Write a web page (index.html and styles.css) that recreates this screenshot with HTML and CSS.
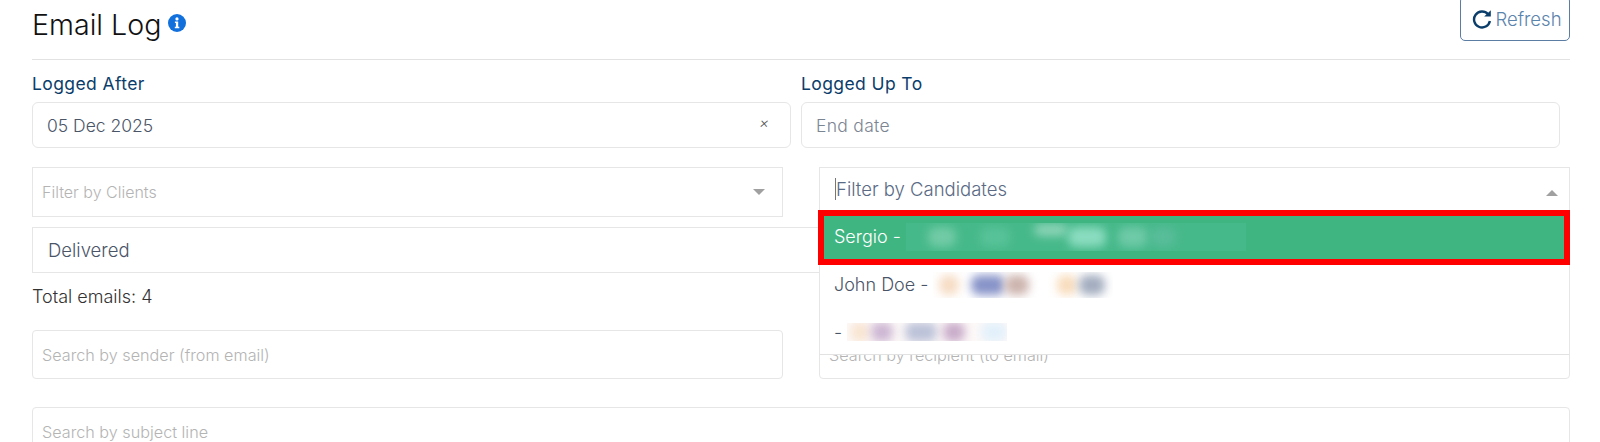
FILE: index.html
```html
<!DOCTYPE html>
<html lang="en">
<head>
  <meta charset="UTF-8" />
  <meta name="viewport" content="width=device-width, initial-scale=1" />
  <title>Email Log</title>
  <link rel="stylesheet" href="styles.css">
</head>
<body>

  <div class="page">
    <div class="page-header">
      <div class="title-wrap">
        <h1>Email Log</h1>
        <svg class="info-icon" viewBox="0 0 18 18" width="18" height="18">
          <circle cx="9" cy="9" r="9" fill="#1170dc" />
          <circle cx="9" cy="4.9" r="1.6" fill="#fff" />
          <path d="M6.9 7.4h3.3v5.4h1.1v1.5H6.8v-1.5h1.1V8.9h-1z" fill="#fff" />
        </svg>
      </div>
      <button type="button" class="refresh-btn">
        <svg class="refresh-icon" viewBox="0 0 20 20" width="20" height="20">
          <path d="M16.1 5.2A8 8 0 1 0 17.9 12" fill="none" stroke="#0b3d6b" stroke-width="2.4" />
          <path d="M12.2 7.6L18.8 1.2v6.4z" fill="#0b3d6b" />
        </svg>
        Refresh
      </button>
    </div>

    <div class="date-row">
      <div class="date-field">
        <label>Logged After</label>
        <div class="date-input">
          <span>05 Dec 2025</span>
          <span class="clear-x">×</span>
        </div>
      </div>
      <div class="date-field">
        <label>Logged Up To</label>
        <div class="date-input placeholder-date">End date</div>
      </div>
    </div>

    <div class="filter-row">
      <div class="select-box">
        <span class="placeholder">Filter by Clients</span>
        <span class="arrow-down"></span>
      </div>
      <div class="candidate-wrap">
        <div class="select-box candidate-box">
          <span class="caret"></span>
          <span>Filter by Candidates</span>
          <span class="arrow-up"></span>
        </div>
        <div class="dropdown">
          <div class="option option-active">
            <span class="option-name">Sergio -</span>
            <div class="redact redact-green">
              <i class="blot g1"></i><i class="blot g2"></i><i class="blot g3"></i>
              <i class="blot g4"></i><i class="blot g5"></i><i class="blot g6"></i>
            </div>
          </div>
          <div class="option option-john">
            <span class="option-name">John Doe -</span>
            <div class="redact redact-john">
              <i class="blot j1"></i><i class="blot j2"></i><i class="blot j3"></i>
              <i class="blot j4"></i><i class="blot j5"></i>
            </div>
          </div>
          <div class="option option-last">
            <span class="option-name">-</span>
            <div class="redact redact-last">
              <i class="blot l1"></i><i class="blot l2"></i><i class="blot l3"></i>
              <i class="blot l4"></i><i class="blot l5"></i>
            </div>
          </div>
        </div>
      </div>
    </div>

    <div class="status-box">Delivered</div>

    <p class="total">Total emails: 4</p>

    <div class="search-row">
      <div class="search-box">Search by sender (from email)</div>
      <div class="search-box recipient-box">Search by recipient (to email)</div>
    </div>

    <div class="search-box subject-box">Search by subject line</div>
  </div>

</body>
</html>
```

FILE: styles.css
```css
html, body {
  margin: 0;
  height: 442px;
  overflow: hidden;
  background: #fff;
}
body {
  font-family: 'Inter', 'Open Sans', sans-serif;
  font-weight: 300;
  color: #4a5568;
}
.page {
  padding: 0 30px 0 32px;
}
.page-header {
  height: 60px;
  box-sizing: border-box;
  border-bottom: 1px solid #e2e2e2;
  display: flex;
  justify-content: space-between;
  align-items: flex-start;
}
.title-wrap {
  display: flex;
  align-items: flex-start;
  gap: 7px;
  padding-top: 6px;
}
h1 {
  margin: 0;
  font-size: 28.6px;
  line-height: 38px;
  font-weight: 300;
  color: #111;
}
.info-icon {
  margin-top: 8px;
}
.refresh-btn {
  width: 110px;
  height: 45px;
  margin-top: -4px;
  border: 1px solid #5b7ca3;
  border-radius: 5px;
  background: #fff;
  color: #5b84ac;
  font-family: inherit;
  font-weight: 300;
  font-size: 18.5px;
  display: flex;
  align-items: center;
  justify-content: center;
  gap: 3px;
  padding: 1px 0 0 4px;
}
.date-row {
  display: grid;
  grid-template-columns: 759px 759px;
  gap: 10px;
  margin-top: 13px;
}
.date-field label {
  display: block;
  font-size: 17.5px;
  letter-spacing: 0.4px;
  line-height: 22px;
  font-weight: 400;
  color: #0b3d6b;
  margin-bottom: 7px;
}
.date-input {
  height: 46px;
  box-sizing: border-box;
  border: 1px solid #e6e6e6;
  border-radius: 6px;
  padding: 0 14px;
  font-size: 17.5px;
  color: #4a5568;
  display: flex;
  align-items: center;
  justify-content: space-between;
}
.placeholder-date {
  color: #7b8592;
  letter-spacing: 0.3px;
}
.clear-x {
  font-size: 15px;
  font-style: italic;
  color: #555;
  margin: 0 7px 5px 0;
}
.filter-row,
.search-row {
  display: grid;
  grid-template-columns: 751px 751px;
  gap: 36px;
}
.filter-row {
  margin-top: 19px;
}
.select-box {
  height: 50px;
  box-sizing: border-box;
  border: 1px solid #e6e6e6;
  padding: 0 9px;
  display: flex;
  align-items: center;
  font-size: 16px;
  position: relative;
}
.placeholder {
  color: #b4b4b4;
}
.arrow-down,
.arrow-up {
  position: absolute;
  right: 17px;
  top: 21px;
  width: 0;
  height: 0;
  border-left: 6px solid transparent;
  border-right: 6px solid transparent;
}
.arrow-down {
  border-top: 6px solid #a0a0a0;
}
.arrow-up {
  right: 11px;
  top: 22px;
  border-bottom: 6px solid #a0a0a0;
}
.candidate-wrap {
  position: relative;
}
.candidate-box {
  padding: 10px 15px 0;
  font-size: 18.5px;
  color: #5a6a85;
  align-items: flex-start;
}
.caret {
  width: 1px;
  height: 22px;
  background: #777;
}
.dropdown {
  position: absolute;
  left: 0;
  right: 0;
  top: 43px;
  background: #fff;
  border-bottom: 1px solid #e2e2e2;
  border-right: 1px solid #e6e6e6;
  border-left: 1px solid #e6e6e6;
  box-sizing: border-box;
  height: 145px;
  z-index: 5;
  font-size: 18px;
  color: #4a5568;
}
.option {
  display: flex;
  align-items: center;
  padding-left: 14px;
}
.option-active {
  height: 55px;
  margin: 0 -1px 0 -2px;
  box-sizing: border-box;
  border: 6px solid #ff0000;
  padding: 0 0 2px 10px;
  background: #3fb582;
  color: #fff;
}
.option-john {
  height: 37px;
  padding-top: 1px;
}
.option-last {
  height: 52px;
  padding-top: 3px;
}
.option-name {
  margin-right: 5px;
  white-space: nowrap;
}
.redact {
  display: flex;
  align-items: center;
  overflow: hidden;
  flex: none;
}
.redact-green {
  width: 340px;
  height: 28px;
  background: #46b98a;
}
.redact-john {
  width: 180px;
  height: 26px;
}
.redact-last {
  width: 160px;
  height: 18px;
  background: #fdf9f8;
}
.blot {
  display: block;
  height: 20px;
  border-radius: 8px;
  filter: blur(5px);
  flex: none;
}
.g1 { width: 28px; margin-left: 22px; background: #72cba6; }
.g2 { width: 30px; margin-left: 24px; background: #58c298; }
.g3 { width: 34px; margin-left: 24px; background: #8ed5b8; height: 12px; margin-bottom: 14px; }
.g4 { width: 38px; margin-left: 0; background: #8bdcc0; }
.g5 { width: 30px; margin-left: 12px; background: #6fcaa8; }
.g6 { width: 26px; margin-left: 2px; background: #58bd9a; }
.j1 { width: 20px; margin-left: 6px; background: #f6dcc4; }
.j2 { width: 34px; margin-left: 12px; background: #8793c8; }
.j3 { width: 24px; margin-left: 0; background: #cdb4ae; }
.j4 { width: 20px; margin-left: 28px; background: #f8dcbc; }
.j5 { width: 26px; margin-left: 2px; background: #a3adbf; }
.l1 { width: 18px; margin-left: 4px; background: #f8e4d0; }
.l2 { width: 22px; margin-left: 2px; background: #cdb6d3; }
.l3 { width: 32px; margin-left: 12px; background: #bcc2d8; }
.l4 { width: 22px; margin-left: 6px; background: #c9acca; }
.l5 { width: 26px; margin-left: 16px; background: #e2f0fb; }
.status-box {
  height: 46px;
  box-sizing: border-box;
  margin-top: 10px;
  border: 1px solid #e6e6e6;
  padding: 0 15px;
  display: flex;
  align-items: center;
  font-size: 18.5px;
  color: #4a5568;
}
.total {
  margin: 12px 0 0;
  font-size: 18px;
  line-height: 24px;
  color: #333;
}
.search-row {
  margin-top: 21px;
}
.search-box {
  height: 49px;
  box-sizing: border-box;
  border: 1px solid #e6e6e6;
  border-radius: 4px;
  padding: 0 9px;
  display: flex;
  align-items: center;
  font-size: 16.2px;
  color: #b4b4b4;
}
.subject-box {
  margin-top: 28px;
}
```
